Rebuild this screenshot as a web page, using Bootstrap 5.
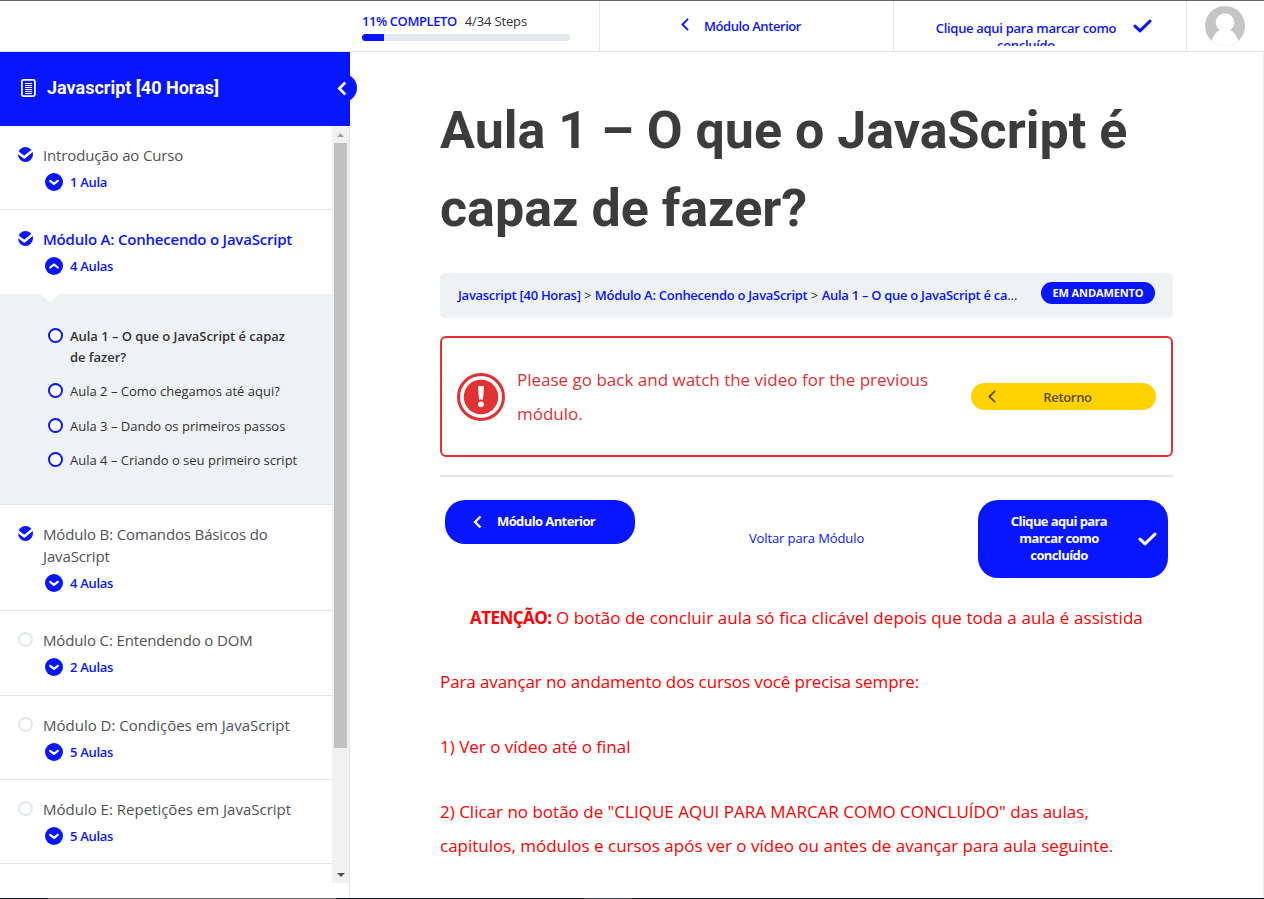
<!DOCTYPE html>
<html lang="pt-br">
<head>
<meta charset="utf-8">
<meta name="viewport" content="width=device-width, initial-scale=1">
<title>Aula 1 – O que o JavaScript é capaz de fazer?</title>
<link rel="stylesheet" href="https://cdn.jsdelivr.net/npm/bootstrap@5.3.0/dist/css/bootstrap.min.css">
<style>
:root{--blue:#0816ff;--line:#e2e7ed;--soft:#eef2f5;--red:#e03232}
body{font-family:"Open Sans","Noto Sans",sans-serif;font-size:13px;line-height:20px;color:#333;background:#fff}
a{color:var(--blue);text-decoration:none}
svg{display:block;flex:none}
.page{height:899px;overflow:hidden;border-top:1px solid #666}
.semi{font-weight:600;letter-spacing:-.31px}
.topbar{height:51px;border-bottom:1px solid var(--line)}
.topbar .cell{border-right:1px solid var(--line)}
.brand-gap{width:350px}
.c-progress{width:250px;padding:10px 0 0 12px}
.c-progress .semi{color:var(--blue);letter-spacing:-.42px}
.steps{letter-spacing:-.15px}
.c-prev{width:294px;padding:15px 0 0 75px;line-height:21px}
.c-prev .semi{letter-spacing:-.43px}
.prev-ico{margin:2px 15px 0 6px}
.c-done{width:293px;padding:19px 0 0 35px}
.done-label{width:194px;height:26px;line-height:17px;overflow:hidden}
.done-ico{margin:-1px 0 0 10px}
.c-avatar{width:77px;padding:5px 0 0 18px}
.pct{width:208px;height:7px;border-radius:4px;background:var(--line);margin-top:3px}
.pct .progress-bar{background:var(--blue)}
.side{width:350px;border-right:1px solid var(--line)}
.side-head{height:74px;margin-right:-1px;background:var(--blue);color:#fff;padding:0 0 2px 21px;font:700 18px/24px Roboto,sans-serif}
.side-head>span:first-of-type{margin-left:11px}
.side-toggle{right:-7px;top:22px;width:28px;height:28px;background:var(--blue);border-radius:50%}
.scroller{height:757px}
.modules{width:332px}
.module{height:84px;padding:18px 30px 0 18px;border-bottom:1px solid var(--line);font-size:15px;line-height:22px;color:#4f5256;column-gap:10px}
.module.opened{border-color:transparent;color:var(--blue)}
.current{letter-spacing:-.21px}
.tight{letter-spacing:-.14px}
.module.two{height:106px}.module.taller{height:85px}
.module>svg{margin-top:3px}
.toggle{font-size:13px;line-height:20px;margin:6px 0 0 2px;gap:7px;color:var(--blue)}
.lessons{height:211px;background:var(--soft);border-bottom:1px solid var(--line);padding:32px 30px 0 48px;line-height:21px}
.lessons:before{content:"";position:absolute;left:41px;top:0;border:9px solid transparent;border-top-color:#fff;border-bottom:0}
.lessons li{margin-bottom:13.4px;gap:7px}
.lessons .semi{letter-spacing:-.04px}
.lessons svg{margin-top:2px}
.track{width:17px;background:#f1f1f1;padding:7px 0 6px}
.thumb{width:13px;height:605px;background:#c1c1c1;margin-top:2px}
.content-area{padding:40px 90px 0;border-right:1px solid #eceff2}
h1{font:700 52px/78px Roboto,sans-serif;color:#3c3c3c;margin:0 -10px 25px 0}
.crumbs{height:45px;background:var(--soft);border-radius:5px;padding:9px 18px 0}
.trail{line-height:26px;width:564px}
.trail .semi{letter-spacing:-.28px}
.status{background:var(--blue);width:114px;height:22px;border-radius:11px;font-size:11px;font-weight:700;line-height:22px;padding:0;margin-left:19px;letter-spacing:-.1px}
.warn{height:121px;border:2px solid var(--red);border-radius:6px;margin:18px 0 0;padding:0 15px;color:var(--red);background:#fff}
.copy,.warn p{font-size:17px;line-height:34px}
.retorno{width:185px;height:27px;border-radius:14px;background:#ffd200;color:#5e4d0a;padding:0 17px}
.rule{height:2px;background:var(--line);margin:18px 0 23px}
.actions{height:78px;margin:0 5px}
.pill{width:190px;border-radius:20px;background:var(--blue);color:#fff;font-weight:700;letter-spacing:-.6px;line-height:17px}
.pill span{padding-bottom:2px}
.prev-pill{height:44px;padding-left:28px;gap:15px}
.done-pill{padding:0 11px 0 17px;justify-content:space-between}
.done-pill span{width:128px}
.back{padding-bottom:2px;letter-spacing:-.1px}
.copy{color:#f00;margin-top:23px}
.copy p{margin-bottom:30.6px}
.copy strong{letter-spacing:-.55px}
.copy .lead-note{letter-spacing:.08px;margin-bottom:30px}
.copy .intro{letter-spacing:-.1px;margin-bottom:31px}
.foot-line{bottom:0;height:1px;background:linear-gradient(90deg,#0b1220 48px,#666 48px 336px,#0b1220 336px 584px,#3a4350 584px 632px,#0b1220 632px)}
</style>
</head>
<body>
<svg class="d-none">
<symbol id="checked" viewBox="0 0 15 15"><circle cx="7.5" cy="7.5" r="7.5" fill="#0816ff"/><path d="M-.5 5.2 6.300 10.300 15.500 2.800" fill="none" stroke="#fff" stroke-width="2.500"/></symbol>
<symbol id="todo" viewBox="0 0 15 15"><circle cx="7.5" cy="7.5" r="6.5" fill="#fff" stroke="#e2e7ed" stroke-width="2"/></symbol>
<symbol id="lesson" viewBox="0 0 15 15"><circle cx="7.5" cy="7.5" r="6.5" fill="#fff" stroke="#0816ff" stroke-width="2"/></symbol>
<symbol id="down" viewBox="0 0 18 18"><circle cx="9" cy="9" r="9" fill="#0816ff"/><path d="m5.200 7.800 3.800 3 3.800-3" fill="none" stroke="#fff" stroke-width="2.200" stroke-linecap="round" stroke-linejoin="round"/></symbol>
<symbol id="up" viewBox="0 0 18 18"><circle cx="9" cy="9" r="9" fill="#0816ff"/><path d="m5.200 10.500 3.800-3 3.800 3" fill="none" stroke="#fff" stroke-width="2.200" stroke-linecap="round" stroke-linejoin="round"/></symbol>
<symbol id="prev" viewBox="0 0 8 13"><path d="M6.600 1.300 1.400 6.500l5.200 5.200" fill="none" stroke="currentColor" stroke-width="1.800" stroke-linecap="round" stroke-linejoin="round"/></symbol>
<symbol id="tick" viewBox="0 0 19 14"><path d="m2 7.200 5 4.600L17 2.100" fill="none" stroke="currentColor" stroke-width="3" stroke-linecap="round" stroke-linejoin="round"/></symbol>
</svg>
<div class="page position-relative d-flex flex-column">
  <header class="topbar d-flex flex-shrink-0">
    <div class="brand-gap"></div>
    <div class="cell c-progress"><div class="d-flex text-nowrap gap-1"><span class="semi">11% COMPLETO</span><span class="steps ps-1">4/34 Steps</span></div>
      <div class="progress pct"><div class="progress-bar" style="width:10.6%"></div></div></div>
    <div class="cell c-prev"><a href="#" class="d-flex semi"><svg width="8" height="13" class="prev-ico"><use href="#prev"/></svg><span>Módulo Anterior</span></a></div>
    <div class="cell c-done"><a href="#" class="d-flex semi"><span class="done-label text-center">Clique aqui para marcar como concluído</span><svg width="19" height="14" class="done-ico"><use href="#tick"/></svg></a></div>
    <div class="c-avatar"><svg width="40" height="40" viewBox="0 0 40 40"><clipPath id="av"><circle cx="20" cy="20" r="20"/></clipPath><g clip-path="url(#av)"><path fill="#c5c5c5" d="M0 0h40v40H0z"/><circle cx="20" cy="16.500" r="9.300" fill="#fff"/><path d="M5 40c2-9 6-14.500 10.500-16h9C29 25.500 33 31 35 40z" fill="#fff"/></g></svg></div>
  </header>
  <div class="d-flex flex-grow-1">
    <aside class="side flex-shrink-0">
      <div class="side-head position-relative d-flex align-items-center">
        <svg width="15" height="18" viewBox="0 0 15 18" fill="none" stroke="#fff"><rect x=".9" y=".9" width="13" height="16.200" rx="1.500" stroke-width="1.700"/><path d="M4 4.500h7M4 6.500h7M4 8.500h7M4 10.500h7M4 12.500h7M4 14.500h7"/></svg>
        <span>Javascript [40 Horas]</span>
        <span class="side-toggle position-absolute d-flex align-items-center ps-2"><svg width="10" height="15" viewBox="0 0 10 15"><path d="M8.300 1.500 2.300 7.500l6 6" fill="none" stroke="#fff" stroke-width="2.600"/></svg></span>
      </div>
      <div class="scroller d-flex">
        <div class="modules">
          <div class="module d-flex"><svg width="15" height="15"><use href="#checked"/></svg><div><div class="tight">Introdução ao Curso</div><div class="toggle semi d-flex align-items-center"><svg width="18" height="18"><use href="#down"/></svg>1 Aula</div></div></div>
          <div class="module opened d-flex"><svg width="15" height="15"><use href="#checked"/></svg><div><div class="fw-semibold text-nowrap current">Módulo A: Conhecendo o JavaScript</div><div class="toggle semi d-flex align-items-center"><svg width="18" height="18"><use href="#up"/></svg>4 Aulas</div></div></div>
          <ul class="lessons list-unstyled mb-0 position-relative">
            <li class="d-flex semi"><svg width="15" height="15"><use href="#lesson"/></svg><span>Aula 1 – O que o JavaScript é capaz<br>de fazer?</span></li>
            <li class="d-flex"><svg width="15" height="15"><use href="#lesson"/></svg>Aula 2 – Como chegamos até aqui?</li>
            <li class="d-flex"><svg width="15" height="15"><use href="#lesson"/></svg>Aula 3 – Dando os primeiros passos</li>
            <li class="d-flex"><svg width="15" height="15"><use href="#lesson"/></svg><span class="text-nowrap">Aula 4 – Criando o seu primeiro script</span></li>
          </ul>
          <div class="module two d-flex"><svg width="15" height="15"><use href="#checked"/></svg><div><div class="tight">Módulo B: Comandos Básicos do<br>JavaScript</div><div class="toggle semi d-flex align-items-center"><svg width="18" height="18"><use href="#down"/></svg>4 Aulas</div></div></div>
          <div class="module taller d-flex"><svg width="15" height="15"><use href="#todo"/></svg><div><div class="tight">Módulo C: Entendendo o DOM</div><div class="toggle semi d-flex align-items-center"><svg width="18" height="18"><use href="#down"/></svg>2 Aulas</div></div></div>
          <div class="module d-flex"><svg width="15" height="15"><use href="#todo"/></svg><div><div class="text-nowrap">Módulo D: Condições em JavaScript</div><div class="toggle semi d-flex align-items-center"><svg width="18" height="18"><use href="#down"/></svg>5 Aulas</div></div></div>
          <div class="module d-flex"><svg width="15" height="15"><use href="#todo"/></svg><div><div class="text-nowrap">Módulo E: Repetições em JavaScript</div><div class="toggle semi d-flex align-items-center"><svg width="18" height="18"><use href="#down"/></svg>5 Aulas</div></div></div>
        </div>
        <div class="track d-flex flex-column align-items-center">
          <svg width="7" height="4" class="mb-1"><path d="M0 4 3.500 0 7 4z" fill="#a3a3a3"/></svg>
          <div class="thumb"></div>
          <svg width="8" height="4" class="mt-auto"><path d="M0 0h8L4 4z" fill="#505050"/></svg>
        </div>
      </div>
    </aside>
    <main class="content-area flex-grow-1">
      <h1>Aula 1 – O que o JavaScript é<br>capaz de fazer?</h1>
      <div class="crumbs d-flex align-items-start">
        <div class="trail text-nowrap"><a href="#" class="semi">Javascript [40 Horas]</a> &gt; <a href="#" class="semi">Módulo A: Conhecendo o JavaScript</a> &gt; <a href="#" class="semi">Aula 1 – O que o JavaScript é ca</a>...</div>
        <span class="badge status">EM ANDAMENTO</span>
      </div>
      <div class="alert warn d-flex align-items-center">
        <svg width="48" height="48" viewBox="0 0 48 48"><circle cx="24" cy="24" r="22.500" fill="#fff" stroke="#e03232" stroke-width="3"/><circle cx="24" cy="24" r="17.300" fill="#e03232"/><path d="M21 13h6l-1 13.500h-4z" fill="#fff"/><circle cx="24" cy="31.300" r="2.900" fill="#fff"/></svg>
        <p class="mb-0 ms-2 ps-1 flex-grow-1">Please go back and watch the video for the previous<br>módulo.</p>
        <a href="#" class="retorno semi d-flex align-items-center"><svg width="8" height="13"><use href="#prev"/></svg><span class="flex-grow-1 text-center">Retorno</span></a>
      </div>
      <div class="rule"></div>
      <div class="actions d-flex justify-content-between">
        <a href="#" class="pill d-flex align-items-center align-self-start prev-pill"><svg width="9" height="14"><path d="M7.500 1.500 2 7l5.500 5.500" fill="none" stroke="#fff" stroke-width="2.300"/></svg><span>Módulo Anterior</span></a>
        <a href="#" class="align-self-center back">Voltar para Módulo</a>
        <a href="#" class="pill d-flex align-items-center done-pill"><span class="text-center">Clique aqui para<br>marcar como<br>concluído</span><svg width="19" height="14"><use href="#tick"/></svg></a>
      </div>
      <div class="copy text-nowrap">
        <p class="text-center lead-note"><strong>ATENÇÃO:</strong> O botão de concluir aula só fica clicável depois que toda a aula é assistida</p>
        <p class="intro">Para avançar no andamento dos cursos você precisa sempre:</p>
        <p>1) Ver o vídeo até o final</p>
        <p>2) Clicar no botão de "CLIQUE AQUI PARA MARCAR COMO CONCLUÍDO" das aulas,<br>capitulos, módulos e cursos após ver o vídeo ou antes de avançar para aula seguinte.</p>
      </div>
    </main>
  </div>
  <div class="foot-line position-absolute w-100"></div>
</div>
<script src="https://cdn.jsdelivr.net/npm/bootstrap@5.3.0/dist/js/bootstrap.bundle.min.js"></script>
</body>
</html>
